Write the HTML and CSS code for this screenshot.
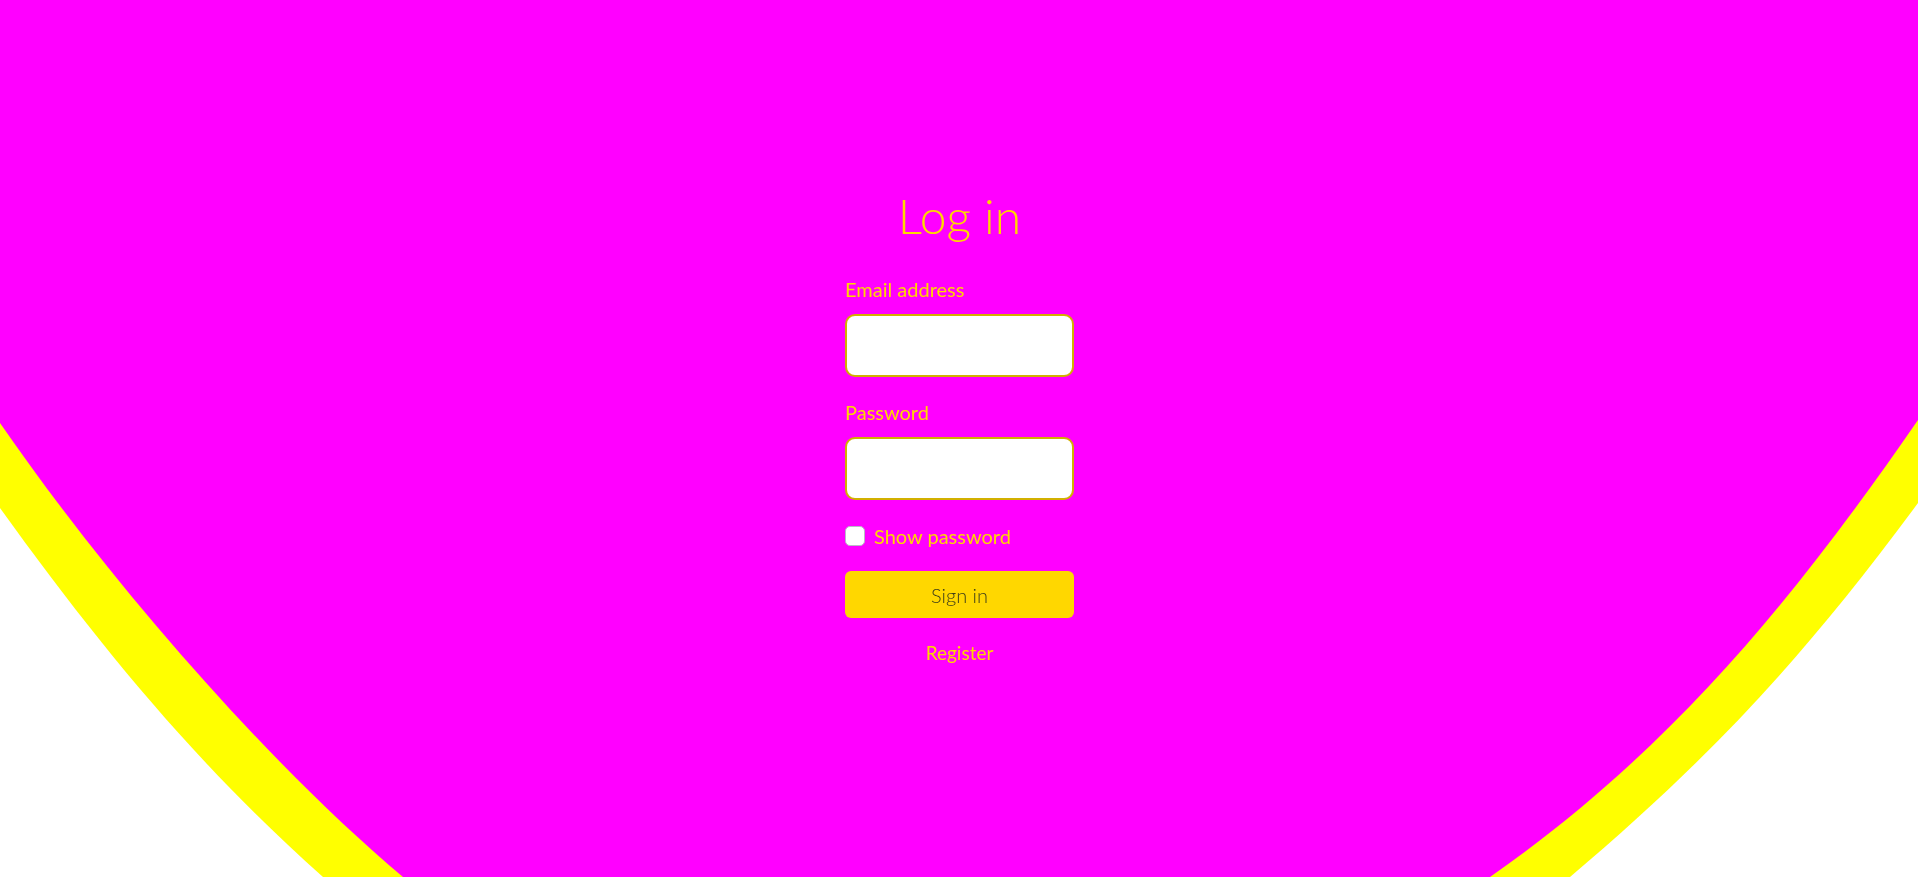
FILE: index.html
```html
<!DOCTYPE html>
<html lang="en">
<head>
<meta charset="utf-8">
<title>Log in</title>
<link rel="stylesheet" href="styles.css">
</head>
<body>
<svg class="backdrop" viewBox="0 0 1918 877" preserveAspectRatio="none" aria-hidden="true">
  <path fill="#ffff00" d="M0,0 H1918 V503 C1804.9,655.8 1714.8,754.1 1570,877 L323,877 C196,764 99.3,646 0,508 Z"/>
  <path fill="#ff00ff" d="M0,0 H1918 V420 C1793,601 1670.2,750.9 1490,877 L403,877 C272.8,767.7 113.6,587.6 0,423 Z"/>
</svg>
<main class="page">
  <form class="login">
    <h1 class="title">Log in</h1>
    <label class="label" for="email">Email address</label>
    <input class="field" id="email" type="email">
    <label class="label label-pass" for="password">Password</label>
    <input class="field" id="password" type="password">
    <div class="check-row">
      <input class="check" id="show" type="checkbox">
      <label class="check-label" for="show">Show password</label>
    </div>
    <button class="submit" type="button">Sign in</button>
    <a class="register" href="#">Register</a>
  </form>
</main>
</body>
</html>
```
FILE: styles.css
```css
html, body {
  margin: 0;
  padding: 0;
  background: #ffffff;
  height: 100%;
  overflow: hidden;
}

body {
  font-family: Lato, "Noto Sans", sans-serif;
}

.backdrop {
  position: fixed;
  left: 0;
  top: 0;
  width: 100%;
  height: 100%;
  z-index: 0;
  display: block;
}

.page {
  position: relative;
  z-index: 1;
  display: flex;
  justify-content: center;
  padding-top: 186px;
  padding-left: 1px;
}

.login {
  width: 229px;
  display: flex;
  flex-direction: column;
}

.title {
  margin: 0;
  font-size: 48px;
  line-height: 60px;
  font-weight: 300;
  color: #ffd700;
  text-align: center;
}

.label {
  margin-top: 31px;
  font-size: 20px;
  line-height: 24px;
  color: #ffd700;
}

.label-pass {
  margin-top: 23px;
}

.field {
  margin-top: 13px;
  box-sizing: border-box;
  width: 229px;
  height: 63px;
  border: 2px solid #d2b000;
  border-radius: 10px;
  background: #ffffff;
  outline: none;
  padding: 0 12px;
  font-family: inherit;
  font-size: 18px;
}

.check-row {
  margin-top: 23px;
  display: flex;
  align-items: center;
  height: 26px;
  gap: 9px;
}

.check {
  appearance: none;
  -webkit-appearance: none;
  margin: 0;
  width: 20px;
  height: 20px;
  box-sizing: border-box;
  background: #ffffff;
  border: 1px solid #b9b9c8;
  border-radius: 5px;
}

.check-label {
  font-size: 20px;
  line-height: 26px;
  color: #ffd700;
}

.submit {
  margin-top: 22px;
  height: 47px;
  border: none;
  border-radius: 6px;
  background: #ffd700;
  color: #3d3d1a;
  font-family: inherit;
  font-size: 20px;
  font-weight: 300;
  padding: 0;
}

.register {
  margin-top: 23px;
  align-self: center;
  font-size: 19px;
  line-height: 24px;
  color: #ffd700;
  text-decoration: none;
}
```
